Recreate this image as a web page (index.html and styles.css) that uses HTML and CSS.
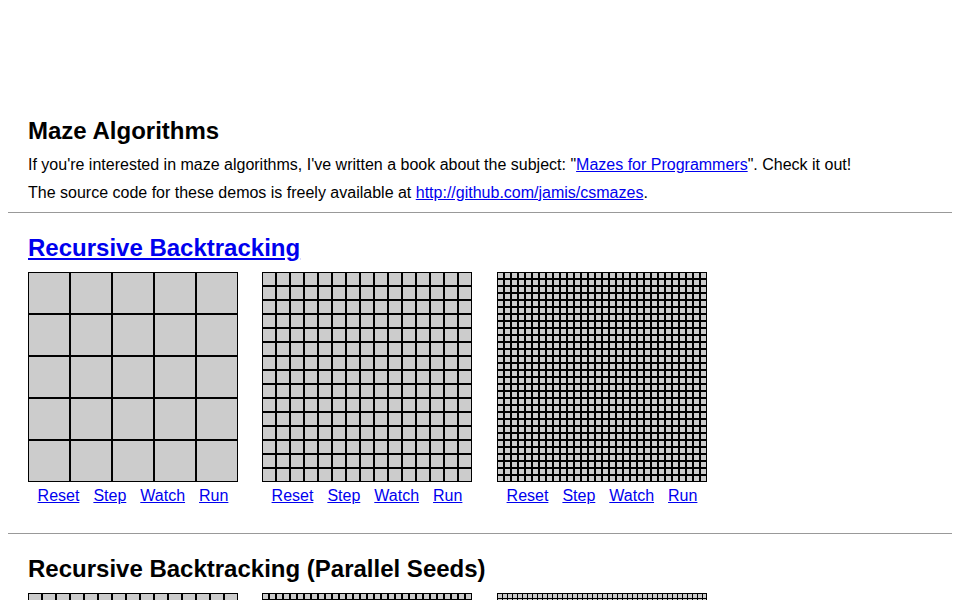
FILE: index.html
```html
<!DOCTYPE html>
<html lang="en">
<head>
    <meta charset="UTF-8">
    <title>Maze Algorithms</title>
    <link rel="stylesheet" href="styles.css">
</head>
<body>
    <div class="intro">
        <h1>Maze Algorithms</h1>
        <p class="first">If you're interested in maze algorithms, I've written a book about the subject: "<a href="#">Mazes for Programmers</a>". Check it out!</p>
        <p>The source code for these demos is freely available at <a href="#">http://github.com/jamis/csmazes</a>.</p>
    </div>

    <hr>

    <div class="demo">
        <h2><a href="#">Recursive Backtracking</a></h2>
        <div class="mazes">
            <div class="maze-box">
                <div class="maze grid5"></div>
                <div class="controls"><a href="#">Reset</a><a href="#">Step</a><a href="#">Watch</a><a href="#">Run</a></div>
            </div>
            <div class="maze-box">
                <div class="maze grid15"></div>
                <div class="controls"><a href="#">Reset</a><a href="#">Step</a><a href="#">Watch</a><a href="#">Run</a></div>
            </div>
            <div class="maze-box">
                <div class="maze grid30"></div>
                <div class="controls"><a href="#">Reset</a><a href="#">Step</a><a href="#">Watch</a><a href="#">Run</a></div>
            </div>
        </div>
    </div>

    <hr>

    <div class="demo">
        <h2>Recursive Backtracking (Parallel Seeds)</h2>
        <div class="mazes">
            <div class="maze-box">
                <div class="maze grid15"></div>
                <div class="controls"><a href="#">Reset</a><a href="#">Step</a><a href="#">Watch</a><a href="#">Run</a></div>
            </div>
            <div class="maze-box">
                <div class="maze grid30"></div>
                <div class="controls"><a href="#">Reset</a><a href="#">Step</a><a href="#">Watch</a><a href="#">Run</a></div>
            </div>
            <div class="maze-box">
                <div class="maze grid42"></div>
                <div class="controls"><a href="#">Reset</a><a href="#">Step</a><a href="#">Watch</a><a href="#">Run</a></div>
            </div>
        </div>
    </div>
</body>
</html>
```

FILE: styles.css
```css
body {
    margin: 8px;
    font-family: "Liberation Sans", Arial, sans-serif;
    font-size: 16px;
    line-height: 18px;
    color: #000;
    background-color: #fff;
}

a {
    color: #0000ee;
}

.intro {
    padding: 109px 20px 0 20px;
}

h1, h2 {
    font-size: 24px;
    line-height: 28px;
    font-weight: bold;
    margin: 0;
}

.intro p {
    margin: 10px 0 0 0;
}

.intro p.first {
    margin-top: 11px;
}

hr {
    border: 0;
    border-top: 1px solid #999;
    margin: 10px 0 0 0;
    height: 0;
}

.demo {
    padding: 21px 20px 28px 20px;
}

.mazes {
    display: flex;
    gap: 24px;
    margin-top: 10px;
}

.maze-box {
    width: 210px;
}

.maze-box:last-child {
    margin-left: 1px;
}

.maze {
    width: 210px;
    height: 210px;
    background-color: #ccc;
    background-image: linear-gradient(#000 2px, transparent 2px),
                      linear-gradient(90deg, #000 2px, transparent 2px);
    background-position: -1px -1px;
    box-shadow: inset 0 0 0 1px #000;
}

.maze.grid5 {
    background-size: 42px 42px;
}

.maze.grid15 {
    background-size: 14px 14px;
}

.maze.grid30 {
    background-size: 7px 7px;
}

.maze.grid42 {
    background-image: linear-gradient(#000 1px, transparent 1px),
                      linear-gradient(90deg, #000 1px, transparent 1px);
    background-position: 0 0;
    background-size: 5px 5px;
}

.controls {
    display: flex;
    justify-content: center;
    gap: 14px;
    margin-top: 5px;
}

.demo + hr {
    margin-top: 0;
}
```
